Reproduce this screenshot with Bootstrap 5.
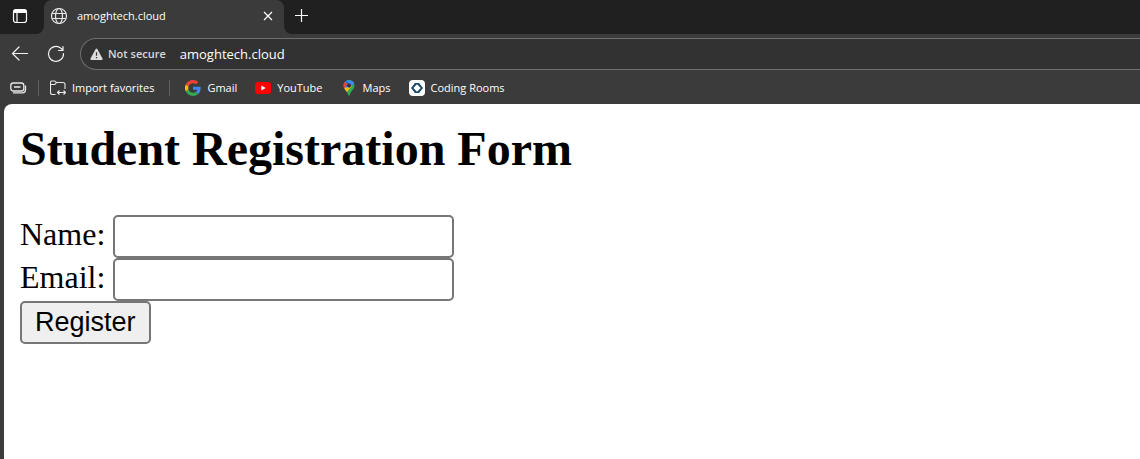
<!DOCTYPE html>
<html lang="en">
<head>
<meta charset="utf-8">
<meta name="viewport" content="width=device-width, initial-scale=1">
<title>amoghtech.cloud</title>
<link href="https://cdn.jsdelivr.net/npm/bootstrap@5.3.0/dist/css/bootstrap.min.css" rel="stylesheet">
<style>
  body { background: #3b3b3b; color: #fff; font-family: "Segoe UI", "Open Sans", "Noto Sans", sans-serif; font-size: 11px; line-height: 16px; }
  svg { display: block; flex: none; }
  .icon-btn { background: none; border: 0; padding: 0; color: #fff; display: flex; align-items: center; justify-content: center; flex: none; }
  .tabstrip { background: #202020; height: 34px; }
  .corner-cell { width: 44px; background: #202020; border-bottom-right-radius: 8px; padding: 0 0 2px 12px; }
  .tab-base { background: #3b3b3b; }
  .browser-tab { width: 240px; background: #3b3b3b; border-top-right-radius: 8px; border-top-left-radius: 8px; padding: 0 8px 2px 6px; gap: 9px; }
  .tab-edge { background: #202020; border-bottom-left-radius: 8px; padding: 0 10px 3px; }
  .toolbar { height: 40px; padding: 4px 0 4px 10px; }
  .address { height: 32px; background: #323232; border: 1px solid #6f6f6f; border-right: 0; border-radius: 16px 0 0 16px; padding-left: 9px; margin-left: 14px; }
  .not-secure { color: #d8d8d8; font-weight: 600; gap: 5px; margin-right: 14px; }
  .url { background: none; border: 0; outline: 0; padding: 0; color: #fff; font-size: 13px; line-height: 20px; }
  .bookmarks { height: 30px; padding: 0 10px 2px; gap: 18px; }
  .bookmarks a { color: #fff; gap: 6px; text-decoration: none; white-space: nowrap; }
  .rule { width: 1px; height: 16px; background: #606060; margin: 0 -3px; }
  .rule-tight { margin: 0 -7px; }
  .page { background: #fff; color: #000; margin-left: 4px; padding: 17px 16px 16px; border-top-left-radius: 8px; font: 32px/39px "Liberation Serif", "Times New Roman", serif; }
  .page h1 { font-size: 48px; line-height: 56px; font-weight: 700; margin: 0 0 38px; }
  .page label { margin-right: 8px; }
  .text-field { width: 341px; height: 43px; padding: 2px 4px; border: 2px solid #767676; border-radius: 5px; background: #fff; font: 27px/31px "Liberation Sans", Arial, sans-serif; }
  .register { height: 43px; padding: 0 13px 2px; border: 2px solid #767676; border-radius: 5px; background: #efefef; color: #000; font: 27px/36px "Liberation Sans", Arial, sans-serif; }
</style>
</head>
<body class="min-vh-100 d-flex flex-column">
<header>
  <div class="tabstrip d-flex">
    <div class="tab-base d-flex">
      <div class="corner-cell d-flex align-items-center">
        <button class="icon-btn" type="button" aria-label="Tab actions">
          <svg width="16" height="16" viewBox="0 0 16 16" fill="none" stroke="#fff"><rect x="1.500" y="1.500" width="13" height="13" rx="2.500" stroke-width="1.200"/><path d="M2 4V3q0-1 1-1h10q1 0 1 1v1.500H2z" fill="#fff"/><path d="M5 5v9.500" stroke-width="1.200"/></svg>
        </button>
      </div>
    </div>
    <div class="browser-tab d-flex align-items-center">
      <svg width="18" height="18" viewBox="0 0 18 18" fill="none" stroke="#e8e8e8" stroke-width="1.200"><circle cx="9" cy="9" r="7.500"/><ellipse cx="9" cy="9" rx="3.500" ry="7.500"/><path d="M2.200 6.500h13.600M2.200 11.500h13.600"/></svg>
      <span class="flex-grow-1">amoghtech.cloud</span>
      <button class="icon-btn" type="button" aria-label="Close tab">
        <svg width="16" height="16" viewBox="0 0 16 16" stroke="#fff" stroke-width="1.200"><path d="m4 4 8 8m0-8-8 8"/></svg>
      </button>
    </div>
    <div class="tab-base d-flex flex-grow-1">
      <div class="tab-edge d-flex align-items-center flex-grow-1">
        <button class="icon-btn" type="button" aria-label="New tab">
          <svg width="15" height="15" viewBox="0 0 15 15" stroke="#fff" stroke-width="1.200"><path d="M7.500 1v13M1 7.500h13"/></svg>
        </button>
      </div>
    </div>
  </div>
  <div class="toolbar d-flex align-items-center">
    <button class="icon-btn" type="button" aria-label="Back">
      <svg width="20" height="20" viewBox="0 0 20 20" fill="none" stroke="#f0f0f0" stroke-width="1.200" stroke-linecap="round" stroke-linejoin="round"><path d="M17.500 9.500H2.500M9 3 2.500 9.500 9 16"/></svg>
    </button>
    <button class="icon-btn ms-3" type="button" aria-label="Refresh">
      <svg width="20" height="20" viewBox="0 0 20 20" fill="none" stroke="#f0f0f0" stroke-width="1.200" stroke-linecap="round" stroke-linejoin="round"><path d="M17.500 9.500a7.500 7.500 0 1 1-2.600-5.300L17 6.200M17 2.500v4h-4.500"/></svg>
    </button>
    <div class="address d-flex align-items-center flex-grow-1">
      <div class="not-secure d-flex align-items-center text-nowrap">
        <svg width="13" height="13" viewBox="0 0 13 13"><path d="M5.700 1q.8-1 1.600 0l5.200 9.500q.5 1.500-1 1.500H1.500q-1.500 0-1-1.500z" fill="#dcdcdc"/><path d="M6.500 4.200v3.600m0 1.300v1.200" stroke="#323232" stroke-width="1.200"/></svg>
        <span>Not secure</span>
      </div>
      <input class="url flex-grow-1" type="text" value="amoghtech.cloud" aria-label="Address">
    </div>
  </div>
  <nav class="bookmarks d-flex align-items-center" aria-label="Favorites">
    <button class="icon-btn" type="button" aria-label="Collections">
      <svg width="17" height="16" viewBox="0 0 17 16" fill="none" stroke="#e8e8e8" stroke-width="1.300"><rect x=".8" y="3" width="13" height="8" rx="2.500"/><path d="M4 7h6.500M3 12.800h9.500q3 0 3-3V5.500"/></svg>
    </button>
    <span class="rule rule-tight"></span>
    <a class="d-flex align-items-center" href="#">
      <svg width="16" height="16" viewBox="0 0 16 16" fill="none" stroke="#e8e8e8" stroke-width="1.100" stroke-linejoin="round"><path d="M5.500 14.500H2.500q-2 0-2-2V2.500Q.5 1 2 1h2.500q1 0 1.800 1.500H13q2 0 2 2V9M.5 4.500h4q1 0 1.800-2M7.500 12.500h8M9.500 10.500l-2 2 2 2m4-4 2 2-2 2"/></svg>
      <span>Import favorites</span>
    </a>
    <span class="rule"></span>
    <a class="d-flex align-items-center" href="#">
      <svg width="16" height="16" viewBox="0 0 48 48"><path fill="#EA4335" d="M24 9.500c3.500 0 6.700 1.200 9.200 3.600l6.900-6.900C35.900 2.400 30.500 0 24 0 14.600 0 6.500 5.400 2.600 13.200l8 6.200C12.400 13.700 17.700 9.500 24 9.500z"/><path fill="#4285F4" d="M47 24.500c0-1.600-.2-3.100-.4-4.500H24v9h12.900c-.6 3-2.200 5.500-4.700 7.200l7.700 6C44.400 38 47 31.800 47 24.500z"/><path fill="#FBBC05" d="M10.500 28.600a14.500 14.500 0 0 1 0-9.200l-8-6.200a24 24 0 0 0 0 21.600z"/><path fill="#34A853" d="M24 48c6.500 0 11.900-2.100 15.900-5.800l-7.700-6c-2.200 1.400-4.900 2.300-8.200 2.300-6.300 0-11.600-4.200-13.500-9.900l-8 6.200C6.500 42.600 14.600 48 24 48z"/></svg>
      <span>Gmail</span>
    </a>
    <a class="d-flex align-items-center" href="#">
      <svg width="16" height="16" viewBox="0 0 16 16"><rect y="2" width="16" height="12" rx="3" fill="#f00"/><path d="m6.300 5.500 4.400 2.500-4.400 2.500z" fill="#fff"/></svg>
      <span>YouTube</span>
    </a>
    <a class="d-flex align-items-center" href="#">
      <svg width="16" height="16" viewBox="0 0 16 16"><clipPath id="pin"><path d="M8 0a5.500 5.500 0 0 1 5.500 5.500c0 4-4 5.500-4.700 9.500q-.8 1.500-1.600 0C6.500 11 2.500 9.500 2.500 5.500A5.500 5.500 0 0 1 8 0z"/></clipPath><g clip-path="url(#pin)"><path fill="#34A853" d="M0 0h16v16H0z"/><path fill="#FBBC04" d="M0 11 8 2l3 4-6 7z"/><path fill="#4285F4" d="M3 0h11v3L8 8 4 3z"/><path fill="#1A73E8" d="m4 0 5 4-4 4-3-6z"/><path fill="#EA4335" d="m3.500 1.500 3 2.800L3 9 1 5z"/></g><circle cx="8" cy="5.500" r="2" fill="#333"/></svg>
      <span>Maps</span>
    </a>
    <a class="d-flex align-items-center" href="#">
      <svg width="16" height="16" viewBox="0 0 16 16"><rect width="16" height="16" rx="4" fill="#fff"/><path d="M6 3h4l4 5-4 5H6L2 8z" fill="#17486b"/><path d="m8 4.300 3.700 3.700L8 11.700 4.300 8z" fill="#fff"/></svg>
      <span>Coding Rooms</span>
    </a>
  </nav>
</header>
<main class="page flex-grow-1">
  <h1>Student Registration Form</h1>
  <form>
    <div class="d-flex"><label for="name">Name:</label><input class="text-field" id="name" type="text"></div>
    <div class="d-flex"><label for="email">Email:</label><input class="text-field" id="email" type="email"></div>
    <button class="register d-block" type="submit">Register</button>
  </form>
</main>
<script src="https://cdn.jsdelivr.net/npm/bootstrap@5.3.0/dist/js/bootstrap.bundle.min.js"></script>
</body>
</html>
